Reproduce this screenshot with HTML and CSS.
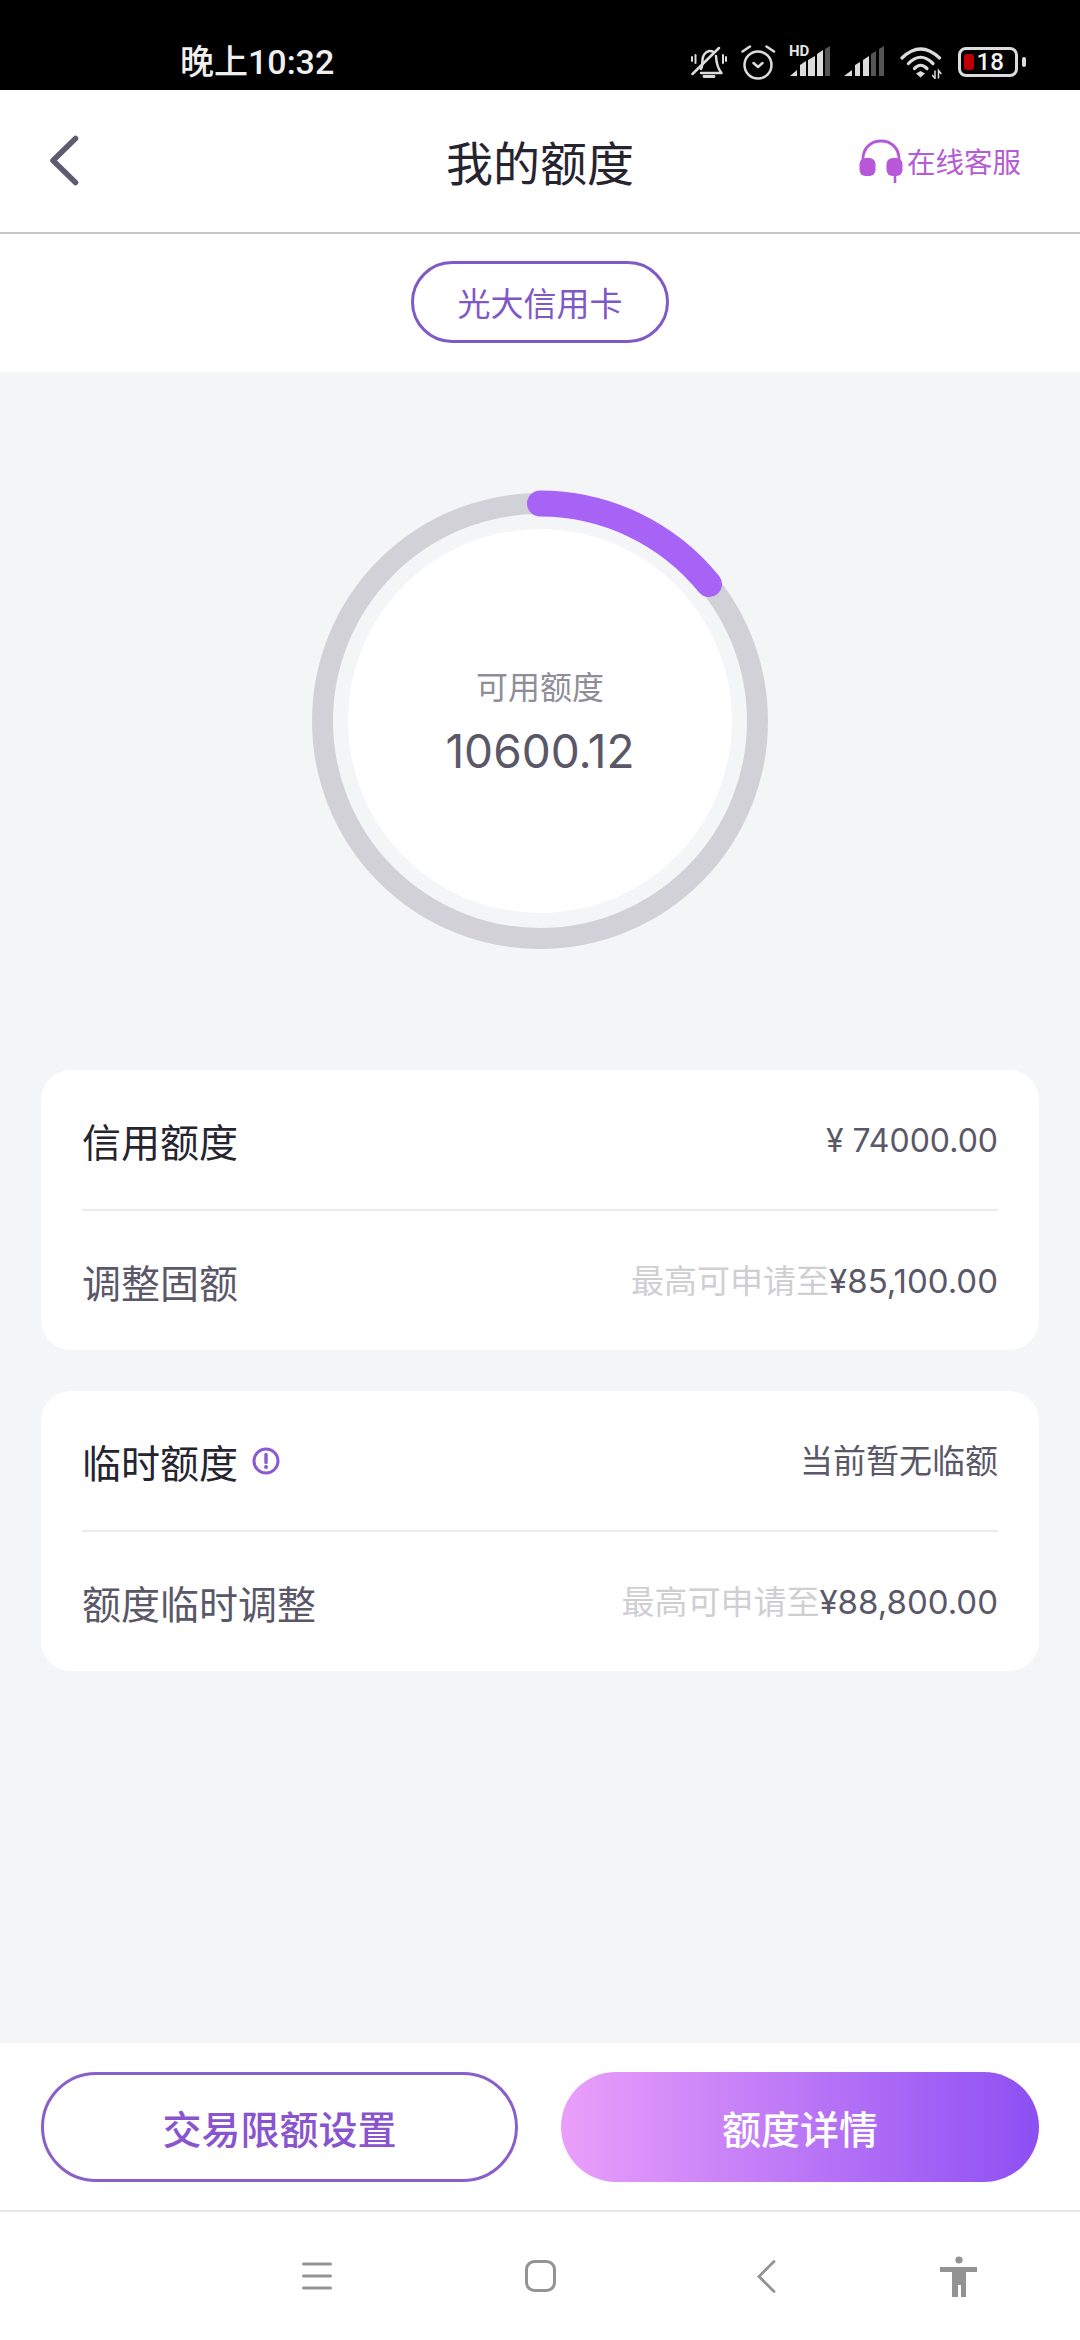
FILE: index.html
```html
<!DOCTYPE html>
<html lang="zh-CN">
<head>
<meta charset="utf-8">
<title>我的额度</title>
<link rel="stylesheet" href="styles.css">
</head>
<body>
<div class="app">
  <div class="statusbar">
    <span class="time">晚上10:32</span>
    <div class="status-icons">
      <svg class="i-bell" width="36" height="34" viewBox="0 0 36 34" fill="none" stroke="#dcdcdc" stroke-width="2.500" stroke-linecap="round" stroke-linejoin="round">
        <path d="M10 24c1.500-3 1.500-6 1.500-9 0-4 2.500-8 6.500-9 1.500-.3 3 0 4.500.8"/>
        <path d="M25 11c.3 5 .5 11 5.500 17H10"/>
        <path d="M13 31.500h10" stroke-width="2.800"/>
        <path d="M1.500 29 28 3"/>
        <path d="M4.500 10v8M1 12v4M32 10v8M35 12v4" stroke-width="2"/>
      </svg>
      <svg class="i-alarm" width="36" height="35" viewBox="0 0 36 35" fill="none" stroke="#dcdcdc" stroke-width="2.500" stroke-linecap="round" stroke-linejoin="round">
        <circle cx="17" cy="20" r="13.500"/>
        <path d="M12.500 18 17 22l4.500-4"/>
        <path d="M1.500 6.500 9 1.500M33 6.500 25.500 1.500"/>
      </svg>
      <div class="hd-signal">
        <span class="hd-text">HD</span>
        <svg width="42" height="30" viewBox="0 0 42 30">
          <path fill="#dcdcdc" d="M2 30l7-6v6zM12 30V19l6-4v15zM20 30V14l7-4v20zM29 30V8l6-4v26z"/>
          <path fill="#555" d="M37 30V3l5-3v30z"/>
        </svg>
      </div>
      <svg class="i-signal" width="40" height="30" viewBox="0 0 40 30">
        <path fill="#dcdcdc" d="M0 30l8-6v6zM11 30V19l5-3v14zM19 30V14l6-4v20z"/>
        <path fill="#555" d="M27 30V8l5-3v25zM35 30V3l5-3v30z"/>
      </svg>
      <svg class="i-wifi" width="44" height="33" viewBox="0 0 44 33" fill="none" stroke="#dcdcdc" stroke-width="3.200" stroke-linecap="round">
        <path d="M2 12Q20.500-6 39.500 12"/>
        <path d="M8.500 17.500Q20.500 5 33 17.500"/>
        <path d="M14.500 22.500Q20.500 16 27 22.500"/>
        <path d="M16 27.500 20.500 25l4.500 2.500-4.500 4z" fill="#dcdcdc" stroke="none"/>
        <path d="M35 24.500v8l-2.800-3.500M38.500 32.500v-8l2.800 3.500" stroke-width="1.500" stroke-linecap="butt"/>
      </svg>
      <div class="battery">
        <div class="battery-body">
          <span class="battery-level"></span>
          <span class="battery-text">18</span>
        </div>
        <span class="battery-nub"></span>
      </div>
    </div>
  </div>

  <header class="header">
    <svg class="back" width="30" height="51" viewBox="0 0 30 51" fill="none" stroke="#5f5b70" stroke-width="5.500" stroke-linecap="round" stroke-linejoin="round">
      <path d="M26.500 3.500 4 25.500l22.500 22"/>
    </svg>
    <h1 class="title">我的额度</h1>
    <div class="service">
      <svg width="44" height="44" viewBox="0 0 44 44">
        <path d="M4 26V20C4 9 12 2 22 2s18 7 18 18v6" fill="none" stroke="#b857d9" stroke-width="2.800"/>
        <rect x="0.500" y="19" width="16" height="18" rx="6" fill="#b857d9"/>
        <rect x="27.500" y="19" width="16" height="18" rx="6" fill="#b857d9"/>
        <path d="M36 36v8" stroke="#b857d9" stroke-width="2.600"/>
      </svg>
      <span>在线客服</span>
    </div>
  </header>

  <div class="tabs"><div class="pill">光大信用卡</div></div>

  <main class="content">
    <div class="ring">
      <svg class="ring-svg" width="470" height="470" viewBox="0 0 470 470" fill="none">
        <circle cx="235" cy="235" r="217.500" stroke="#d2d1d8" stroke-width="21"/>
        <circle cx="235" cy="235" r="192" fill="#fff"/>
        <path d="M235 17.500A217.500 217.500 0 0 1 404 98.100" stroke="#a663f5" stroke-width="26" stroke-linecap="round"/>
      </svg>
      <div class="ring-text">
        <div class="ring-label">可用额度</div>
        <div class="ring-value">10600.12</div>
      </div>
    </div>

    <section class="card">
      <div class="row">
        <span class="row-title">信用额度</span>
        <span class="row-amount">¥&nbsp;74000.00</span>
      </div>
      <div class="divider"></div>
      <div class="row">
        <span class="row-sub">调整固额</span>
        <span class="row-value"><span class="hint">最高可申请至</span>¥85,100.00</span>
      </div>
    </section>

    <section class="card">
      <div class="row">
        <span class="row-title">临时额度
          <svg class="info" width="28" height="28" viewBox="0 0 28 28" fill="none">
            <circle cx="14" cy="14" r="12" stroke="#8a5bd0" stroke-width="3"/>
            <path d="M14 7.500v8" stroke="#8a5bd0" stroke-width="3.400" stroke-linecap="round"/>
            <circle cx="14" cy="20" r="2" fill="#8a5bd0"/>
          </svg>
        </span>
        <span class="row-value">当前暂无临额</span>
      </div>
      <div class="divider"></div>
      <div class="row">
        <span class="row-sub">额度临时调整</span>
        <span class="row-value"><span class="hint">最高可申请至</span>¥88,800.00</span>
      </div>
    </section>
  </main>

  <div class="actions">
    <div class="btn btn-outline">交易限额设置</div>
    <div class="btn btn-fill">额度详情</div>
  </div>

  <nav class="navbar">
    <svg width="30" height="28" viewBox="0 0 30 28" fill="none" stroke="#939393" stroke-width="3" stroke-linecap="round">
      <path d="M1.500 2h27M1.500 14h27M1.500 26h27"/>
    </svg>
    <svg width="31" height="32" viewBox="0 0 31 32" fill="none" stroke="#939393" stroke-width="3">
      <rect x="1.500" y="1.500" width="28" height="29" rx="8"/>
    </svg>
    <svg width="20" height="33" viewBox="0 0 20 33" fill="none" stroke="#939393" stroke-width="2.800" stroke-linecap="round">
      <path d="M17 1.500 2 16.500l15 15"/>
    </svg>
    <svg width="37" height="41" viewBox="0 0 37 41" fill="#939393">
      <circle cx="19" cy="4" r="3.600"/>
      <path d="M0 11h37v5H26v25h-5V29h-3v12h-6V16H0z"/>
    </svg>
  </nav>
</div>
</body>
</html>
```

FILE: styles.css
```css
* { box-sizing: border-box; margin: 0; padding: 0; }

html, body { width: 1080px; height: 2340px; background: #fff; }

body { font-family: Inter, "Noto Sans CJK SC", sans-serif; }

.app { width: 1080px; height: 2340px; display: flex; flex-direction: column; }

/* status bar */
.statusbar {
  height: 90px;
  flex: none;
  background: #000;
  display: flex;
  align-items: flex-end;
  justify-content: space-between;
  padding: 0 54px 6px 180px;
}

.time {
  font-family: Roboto, "Noto Sans CJK SC", sans-serif;
  font-size: 34px;
  font-weight: 500;
  line-height: 44px;
  color: #efefef;
}

.status-icons { display: flex; align-items: flex-end; }

.i-bell { margin-bottom: 5px; }
.i-alarm { margin-left: 14px; margin-bottom: 4px; }
.hd-signal { margin-left: 11px; margin-bottom: 8px; position: relative; height: 30px; }
.hd-signal svg { display: block; }
.i-signal { margin-left: 14px; margin-bottom: 8px; }
.i-wifi { margin-left: 16px; margin-bottom: 5px; }

.hd-text {
  position: absolute;
  left: 1px;
  top: -1px;
  font-family: Roboto, sans-serif;
  font-size: 15px;
  font-weight: 700;
  line-height: 13px;
  color: #e4e4e4;
}

.battery { display: flex; align-items: center; margin-left: 14px; margin-bottom: 7px; }

.battery-body {
  width: 60px;
  height: 30px;
  border: 3.500px solid #dcdcdc;
  border-radius: 8px;
  display: flex;
  align-items: center;
  padding-left: 2.500px;
}

.battery-level { width: 10px; height: 16px; background: #c00000; border-radius: 3px; flex: none; }

.battery-text {
  font-family: Roboto, sans-serif;
  font-size: 24px;
  font-weight: 500;
  line-height: 22px;
  color: #f4f4f4;
  margin-left: 3px;
}

.battery-nub { width: 4px; height: 10px; margin-left: 4px; background: #dcdcdc; border-radius: 2px; }

/* header */
.header {
  height: 144px;
  flex: none;
  display: grid;
  grid-template-columns: 1fr auto 1fr;
  align-items: center;
  padding: 0 59px 0 49px;
  border-bottom: 2px solid #c6c6c6;
}

.back { justify-self: start; margin-bottom: 2px; }

.title {
  font-family: "Noto Sans CJK SC", sans-serif;
  font-size: 47px;
  font-weight: 400;
  color: #25242f;
  line-height: 54px;
  padding-left: 10px;
}

.service {
  justify-self: end;
  display: flex;
  align-items: center;
  gap: 4px;
  color: #b55bd4;
  font-family: "Noto Sans CJK SC", sans-serif;
  font-size: 28.500px;
  line-height: 44px;
}

/* tabs */
.tabs {
  height: 138px;
  flex: none;
  display: flex;
  align-items: center;
  justify-content: center;
  padding-bottom: 2px;
}

.pill {
  width: 258px;
  height: 82px;
  border: 3px solid #8059c6;
  border-radius: 41px;
  display: flex;
  align-items: center;
  justify-content: center;
  font-family: "Noto Sans CJK SC", sans-serif;
  font-size: 33px;
  color: #7f58c8;
}

/* content */
.content {
  flex: 1;
  background: #f4f5f7;
  padding: 114px 41px 0;
  display: flex;
  flex-direction: column;
  gap: 41px;
}

.ring {
  display: grid;
  place-items: center;
  height: 470px;
  margin-bottom: 73px;
}

.ring > * { grid-area: 1 / 1; }

.ring-text { text-align: center; }

.ring-label {
  font-family: "Noto Sans CJK SC", sans-serif;
  font-size: 32px;
  line-height: 46px;
  color: #8f8e98;
}

.ring-value {
  font-size: 46px;
  line-height: 60px;
  margin-top: 13px;
  color: #5a5868;
}

.card {
  height: 280px;
  flex: none;
  background: #fff;
  border-radius: 30px;
  padding: 0 41px;
  display: flex;
  flex-direction: column;
}

.row {
  flex: 1;
  display: flex;
  align-items: center;
  justify-content: space-between;
}

.row-title, .row-sub {
  display: flex;
  align-items: center;
  font-family: "Noto Sans CJK SC", sans-serif;
  font-size: 39px;
  line-height: 50px;
}

.row-title { color: #25242f; }
.row-sub { color: #5a5868; }

.row-value { font-size: 33px; line-height: 48px; color: #5a5868; white-space: nowrap; }

.row-amount { font-size: 32px; line-height: 48px; color: #5a5868; white-space: nowrap; padding-top: 3px; }

.hint { color: #cfcfd3; }

.info { margin-left: 14px; }

.divider { height: 2px; flex: none; background: #ebebee; }

/* actions */
.actions {
  height: 167px;
  flex: none;
  display: flex;
  gap: 43px;
  padding: 29px 41px 28px;
}

.btn {
  border-radius: 55px;
  display: flex;
  align-items: center;
  justify-content: center;
  font-family: "Noto Sans CJK SC", sans-serif;
  font-size: 39px;
  font-weight: 500;
}

.btn-outline { width: 477px; flex: none; border: 3px solid #8a5fc9; color: #8a54d0; }
.btn-fill { flex: 1; background: linear-gradient(90deg, #ea9ffa, #8d4ff3); color: #fff; }

/* nav bar */
.navbar {
  height: 130px;
  flex: none;
  border-top: 2px solid #e6e6e6;
  display: grid;
  grid-template-columns: 223px 232px 183px 37px;
  align-items: center;
  padding: 0 0 0 302px;
}
```
